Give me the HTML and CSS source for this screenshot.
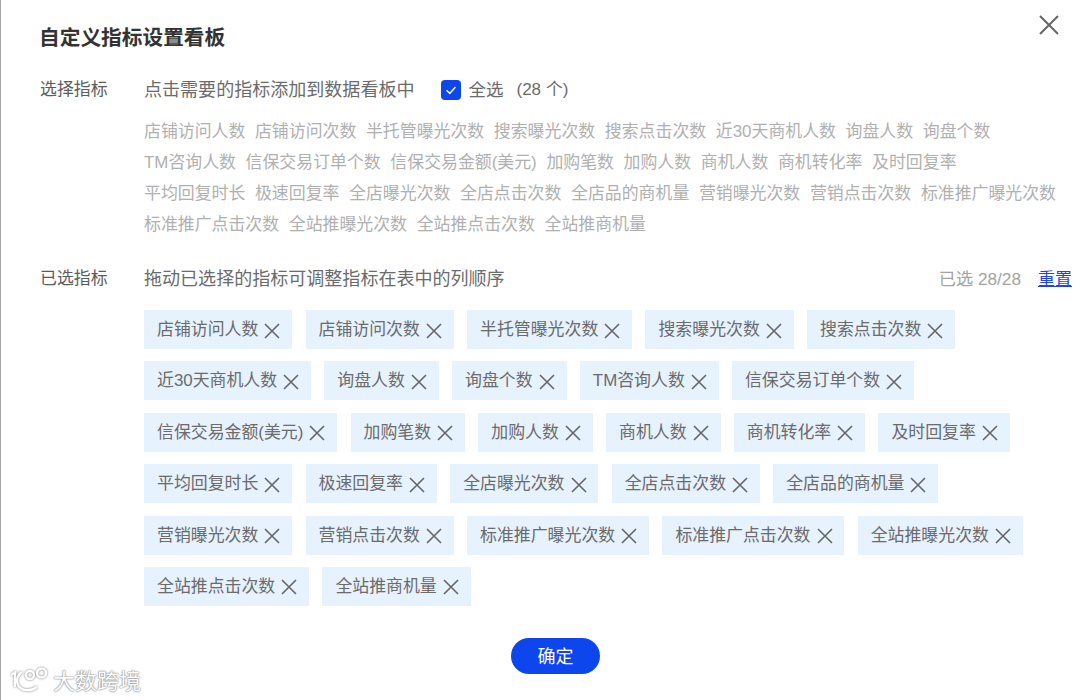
FILE: index.html
```html
<!DOCTYPE html>
<html lang="zh-CN">
<head>
<meta charset="utf-8">
<title>自定义指标设置看板</title>
<link rel="stylesheet" href="styles.css">
</head>
<body>
<div class="modal">
  <svg class="close" viewBox="0 0 20 20" width="20" height="20"><path d="M1 1L19 19M19 1L1 19"/></svg>
  <h1 class="title">自定义指标设置看板</h1>
  <section class="row select-row">
    <div class="label">选择指标</div>
    <div class="body">
      <div class="head">
        <span>点击需要的指标添加到数据看板中</span>
        <span class="check"><svg viewBox="0 0 20 20" width="20" height="20"><path d="M5.5 10.3L8.8 13.4L14.5 7"/></svg></span>
        <span class="all">全选</span>
        <span class="count">(28 个)</span>
      </div>
      <div class="options">
        <span>店铺访问人数</span><span>店铺访问次数</span><span>半托管曝光次数</span><span>搜索曝光次数</span><span>搜索点击次数</span><span>近30天商机人数</span><span>询盘人数</span><span>询盘个数</span>
        <span>TM咨询人数</span><span>信保交易订单个数</span><span>信保交易金额(美元)</span><span>加购笔数</span><span>加购人数</span><span>商机人数</span><span>商机转化率</span><span>及时回复率</span>
        <span>平均回复时长</span><span>极速回复率</span><span>全店曝光次数</span><span>全店点击次数</span><span>全店品的商机量</span><span>营销曝光次数</span><span>营销点击次数</span><span>标准推广曝光次数</span>
        <span>标准推广点击次数</span><span>全站推曝光次数</span><span>全站推点击次数</span><span>全站推商机量</span>
      </div>
    </div>
  </section>
  <section class="row chosen-row">
    <div class="label">已选指标</div>
    <div class="body">
      <div class="head spread">
        <span>拖动已选择的指标可调整指标在表中的列顺序</span>
        <span class="tally">已选 28/28<a class="reset" href="#">重置</a></span>
      </div>
      <div class="tags">
        <span class="tag">店铺访问人数<svg viewBox="0 0 16 16"><path d="M1 1L15 15M15 1L1 15"/></svg></span>
        <span class="tag">店铺访问次数<svg viewBox="0 0 16 16"><path d="M1 1L15 15M15 1L1 15"/></svg></span>
        <span class="tag">半托管曝光次数<svg viewBox="0 0 16 16"><path d="M1 1L15 15M15 1L1 15"/></svg></span>
        <span class="tag">搜索曝光次数<svg viewBox="0 0 16 16"><path d="M1 1L15 15M15 1L1 15"/></svg></span>
        <span class="tag">搜索点击次数<svg viewBox="0 0 16 16"><path d="M1 1L15 15M15 1L1 15"/></svg></span>
        <span class="tag">近30天商机人数<svg viewBox="0 0 16 16"><path d="M1 1L15 15M15 1L1 15"/></svg></span>
        <span class="tag">询盘人数<svg viewBox="0 0 16 16"><path d="M1 1L15 15M15 1L1 15"/></svg></span>
        <span class="tag">询盘个数<svg viewBox="0 0 16 16"><path d="M1 1L15 15M15 1L1 15"/></svg></span>
        <span class="tag">TM咨询人数<svg viewBox="0 0 16 16"><path d="M1 1L15 15M15 1L1 15"/></svg></span>
        <span class="tag">信保交易订单个数<svg viewBox="0 0 16 16"><path d="M1 1L15 15M15 1L1 15"/></svg></span>
        <span class="tag">信保交易金额(美元)<svg viewBox="0 0 16 16"><path d="M1 1L15 15M15 1L1 15"/></svg></span>
        <span class="tag">加购笔数<svg viewBox="0 0 16 16"><path d="M1 1L15 15M15 1L1 15"/></svg></span>
        <span class="tag">加购人数<svg viewBox="0 0 16 16"><path d="M1 1L15 15M15 1L1 15"/></svg></span>
        <span class="tag">商机人数<svg viewBox="0 0 16 16"><path d="M1 1L15 15M15 1L1 15"/></svg></span>
        <span class="tag">商机转化率<svg viewBox="0 0 16 16"><path d="M1 1L15 15M15 1L1 15"/></svg></span>
        <span class="tag">及时回复率<svg viewBox="0 0 16 16"><path d="M1 1L15 15M15 1L1 15"/></svg></span>
        <span class="tag">平均回复时长<svg viewBox="0 0 16 16"><path d="M1 1L15 15M15 1L1 15"/></svg></span>
        <span class="tag">极速回复率<svg viewBox="0 0 16 16"><path d="M1 1L15 15M15 1L1 15"/></svg></span>
        <span class="tag">全店曝光次数<svg viewBox="0 0 16 16"><path d="M1 1L15 15M15 1L1 15"/></svg></span>
        <span class="tag">全店点击次数<svg viewBox="0 0 16 16"><path d="M1 1L15 15M15 1L1 15"/></svg></span>
        <span class="tag">全店品的商机量<svg viewBox="0 0 16 16"><path d="M1 1L15 15M15 1L1 15"/></svg></span>
        <span class="tag">营销曝光次数<svg viewBox="0 0 16 16"><path d="M1 1L15 15M15 1L1 15"/></svg></span>
        <span class="tag">营销点击次数<svg viewBox="0 0 16 16"><path d="M1 1L15 15M15 1L1 15"/></svg></span>
        <span class="tag">标准推广曝光次数<svg viewBox="0 0 16 16"><path d="M1 1L15 15M15 1L1 15"/></svg></span>
        <span class="tag">标准推广点击次数<svg viewBox="0 0 16 16"><path d="M1 1L15 15M15 1L1 15"/></svg></span>
        <span class="tag">全站推曝光次数<svg viewBox="0 0 16 16"><path d="M1 1L15 15M15 1L1 15"/></svg></span>
        <span class="tag">全站推点击次数<svg viewBox="0 0 16 16"><path d="M1 1L15 15M15 1L1 15"/></svg></span>
        <span class="tag">全站推商机量<svg viewBox="0 0 16 16"><path d="M1 1L15 15M15 1L1 15"/></svg></span>
      </div>
    </div>
  </section>
  <div class="actions"><button class="ok" type="button">确定</button></div>
  <div class="mark">
    <svg viewBox="0 0 40 26" width="40" height="26"><path d="M3 9L7 6.5V21"/><path d="M14 6C9 9 8 15 10 19C13 25 22 26 29 21"/><circle cx="22" cy="9" r="4"/><circle cx="33.500" cy="7" r="4.500"/></svg>
    <span>大数跨境</span>
  </div>
</div>
</body>
</html>
```
FILE: styles.css
```css
* { box-sizing: border-box; }
html, body { margin: 0; padding: 0; background: #fff; }
body {
  font-family: "Liberation Sans", "Noto Sans CJK SC", sans-serif;
  font-size: 16.9px;
  color: #5c5c5c;
}
.modal {
  position: relative;
  width: 1080px;
  height: 700px;
  overflow: hidden;
  border-left: 1px solid #a6a6a6;
  padding: 23px 8px 0 39px;
}
.close {
  position: absolute;
  left: 1038px;
  top: 15px;
  fill: none;
  stroke: #666;
  stroke-width: 2;
}
.title {
  margin: 0 0 25px -1px;
  font-size: 20.7px;
  line-height: 30px;
  font-weight: 700;
  color: #333;
}
.row { display: flex; }
.label { width: 104px; flex: none; line-height: 24px; }
.body { flex: 1; min-width: 0; }
.head { display: flex; align-items: center; height: 24px; line-height: 24px; font-size: 18.05px; color: #6b6b6b; }
.spread { justify-content: space-between; }
.check {
  width: 20px;
  height: 20px;
  margin: 0 7px 0 27px;
  border-radius: 4px;
  background: #0e46ee;
}
.check svg { display: block; fill: none; stroke: #fff; stroke-width: 1.5; }
.all { font-size: 17.5px; }
.count { margin-left: 13px; font-size: 17px; }
.options {
  display: flex;
  flex-wrap: wrap;
  column-gap: 9.65px;
  max-width: 918px;
  margin-top: 14px;
  line-height: 31px;
  color: #b0b0b0;
}
.chosen-row { margin-top: 27px; }
.tally { color: #a3a3a3; font-size: 17.2px; }
.reset { margin-left: 17px; font-size: 17px; color: #2147d8; }
.tags { display: flex; flex-wrap: wrap; gap: 12.4px 13.3px; margin-top: 19px; }
.tag {
  display: flex;
  align-items: center;
  height: 39px;
  padding: 0 11.9px 4px 13px;
  background: #e6f2fe;
  color: #6b6b6b;
}
.tag svg {
  width: 16px;
  height: 16px;
  margin: 6px 0 0 6px;
  fill: none;
  stroke: #666;
  stroke-width: 1.6;
}
.actions { display: flex; justify-content: center; margin-top: 32px; padding-right: 1px; }
.ok {
  width: 89px;
  height: 36px;
  padding: 0 0 1px;
  border: 0;
  border-radius: 18px;
  background: #0e46ee;
  color: #fff;
  font: inherit;
  font-size: 18px;
}
.mark {
  position: absolute;
  left: 7px;
  top: 668px;
  display: flex;
  align-items: flex-start;
  gap: 5px;
}
.mark svg {
  margin-top: -2px;
  fill: none;
  stroke: #fff;
  stroke-width: 2.4;
  filter: drop-shadow(0 0 1px #777);
}
.mark span {
  font-size: 22px;
  line-height: 28px;
  color: #fff;
  text-shadow: 0 0 2px #777, 0 0 1px #777;
}
```
